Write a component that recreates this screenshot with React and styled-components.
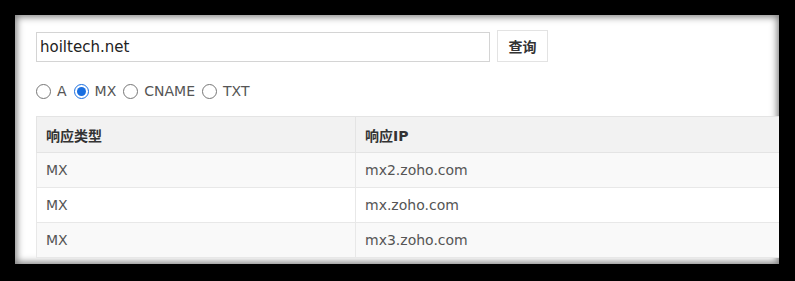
import React, { useState } from 'react';
import styled, { createGlobalStyle } from 'styled-components';

const GlobalStyle = createGlobalStyle`
  html, body {
    margin: 0;
    padding: 0;
    background: #000;
  }
  body {
    font-family: "DejaVu Sans", "Noto Sans CJK SC", sans-serif;
  }
`;

const records = [
  { type: 'MX', ip: 'mx2.zoho.com' },
  { type: 'MX', ip: 'mx.zoho.com' },
  { type: 'MX', ip: 'mx3.zoho.com' },
];

const types = ['A', 'MX', 'CNAME', 'TXT'];

const App = () => {
  const [domain, setDomain] = useState('hoiltech.net');
  const [type, setType] = useState('MX');

  return (
    <>
      <GlobalStyle />
      <Panel>
        <SearchBar>
          <DomainInput value={domain} onChange={(e) => setDomain(e.target.value)} />
          <QueryButton type="button">查询</QueryButton>
        </SearchBar>
        <TypeGroup>
          {types.map((t) => (
            <TypeOption key={t}>
              <input
                type="radio"
                name="type"
                checked={type === t}
                onChange={() => setType(t)}
              />
              {t}
            </TypeOption>
          ))}
        </TypeGroup>
        <ResultTable>
          <thead>
            <tr>
              <HeadCell $first>响应类型</HeadCell>
              <HeadCell>响应IP</HeadCell>
            </tr>
          </thead>
          <tbody>
            {records.map((r, i) => (
              <Row key={i} $striped={i % 2 === 0}>
                <Cell>{r.type}</Cell>
                <Cell>{r.ip}</Cell>
              </Row>
            ))}
          </tbody>
        </ResultTable>
      </Panel>
    </>
  );
};

const Panel = styled.div`
  margin: 15px;
  width: 764px;
  height: 249px;
  box-sizing: border-box;
  background: #fff;
  padding: 15px 0 0 21px;
  overflow: hidden;
  box-shadow: inset 0 0 7px 2px rgba(0, 0, 0, 0.5);
`;

const SearchBar = styled.div`
  display: flex;
  align-items: flex-end;
  gap: 7px;
`;

const DomainInput = styled.input`
  width: 454px;
  height: 30px;
  box-sizing: border-box;
  border: 1px solid #d4d4d4;
  padding: 0 3px;
  font-family: inherit;
  font-size: 15px;
  color: #222;
  outline: none;
`;

const QueryButton = styled.button`
  width: 51px;
  height: 32px;
  border: 1px solid #e3e3e3;
  background: #fff;
  color: #333;
  font-family: inherit;
  font-size: 14px;
  font-weight: bold;
  padding: 0;
`;

const TypeGroup = styled.div`
  display: flex;
  align-items: center;
  gap: 7px;
  margin-top: 21px;
  height: 16px;
`;

const TypeOption = styled.label`
  display: flex;
  align-items: center;
  gap: 6px;
  font-size: 14px;
  color: #555;

  input {
    width: 15px;
    height: 15px;
    margin: 0;
    accent-color: #1a6fe0;
  }
`;

const ResultTable = styled.table`
  margin-top: 17px;
  width: 770px;
  border-collapse: collapse;
  table-layout: fixed;
  font-size: 14px;
`;

const HeadCell = styled.th`
  width: ${(p) => (p.$first ? '319px' : 'auto')};
  height: 36px;
  box-sizing: border-box;
  padding: 0 9px;
  text-align: left;
  background: #f2f2f2;
  color: #333;
  font-weight: bold;
  border: 1px solid #e4e4e4;
`;

const Row = styled.tr`
  background: ${(p) => (p.$striped ? '#f9f9f9' : '#fff')};
`;

const Cell = styled.td`
  height: 35px;
  box-sizing: border-box;
  padding: 0 9px;
  color: #555;
  border: 1px solid #e8e8e8;
`;

export default App;
